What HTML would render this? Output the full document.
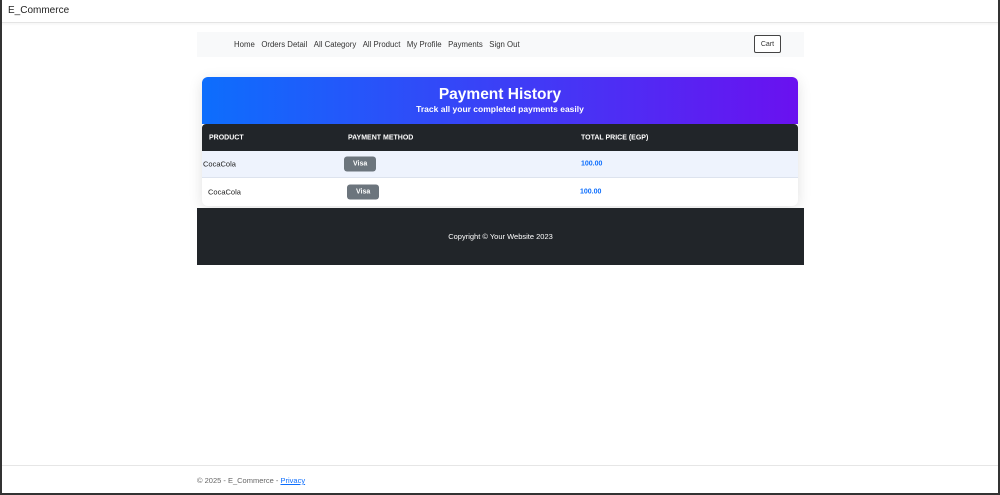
<!DOCTYPE html>
<html><head><style>
*{box-sizing:border-box;margin:0;padding:0}
body{width:1000px;height:495px;overflow:hidden;background:#fff;font-family:"Liberation Sans",sans-serif;position:relative}
.frame{position:absolute;left:0;top:0;width:1000px;height:495px;border-left:2px solid #333;border-right:2px solid #333;border-bottom:2px solid #333;pointer-events:none}
.top{position:absolute;left:0;top:0;width:1000px;height:23px;border-bottom:1px solid #e4e4e4;box-shadow:0 1px 3px rgba(0,0,0,.05)}
.top span{position:absolute;left:8px;top:5px;font-size:10px;color:#222}
.nav{position:absolute;left:197px;top:32px;width:607px;height:25px;background:#f8f9fa}
.nav .links{position:absolute;left:37px;top:8px;font-size:7.8px;color:#333}
.nav .links span{margin-right:6.5px}
.cart{position:absolute;left:754px;top:35px;width:27px;height:18px;border:1px solid #444;border-radius:2px;font-size:7px;text-align:center;line-height:18px;color:#333;background:#fff}
.card{position:absolute;left:202px;top:77px;width:596px;height:129px;border-radius:6px;overflow:hidden;box-shadow:0 3px 14px rgba(0,0,0,.12);background:#fff}
.hd{height:47px;background:linear-gradient(90deg,#0d6efd,#6a11f0);color:#fff;text-align:center}
.hd h1{font-size:15.5px;font-weight:bold;padding-top:9px;line-height:18px}
.hd p{font-size:8.5px;font-weight:bold;line-height:11px}
.th{height:27px;background:#212529;color:#fff;font-size:7px;font-weight:bold;position:relative;border-radius:4px 4px 0 0}
.th span,.r span{position:absolute;top:50%;transform:translateY(-50%)}
.r{height:27px;position:relative;font-size:7.5px;color:#222}
.r1{background:#eef3fd;border-bottom:1px solid #dde3ee}
.b{background:#6c757d;color:#fff;font-weight:bold;font-size:7px;padding:4px 9px;border-radius:3px}
.pr{color:#0d6efd;font-weight:bold;font-size:7px}
.foot{position:absolute;left:197px;top:208px;width:607px;height:57px;background:#212529;color:#fff;font-size:7.5px;text-align:center;line-height:58px}
.bot{position:absolute;left:0;top:465px;width:1000px;border-top:1px solid #e6e6e6}
.bot span{position:absolute;left:197px;top:10px;font-size:7.5px;color:#666}
.bot a{color:#0d6efd;text-decoration:underline}
</style></head><body>
<div class="top"><span>E_Commerce</span></div>
<div class="nav"><div class="links"><span>Home</span><span>Orders Detail</span><span>All Category</span><span>All Product</span><span>My Profile</span><span>Payments</span><span>Sign Out</span></div></div>
<div class="cart">Cart</div>
<div class="card">
<div class="hd"><h1>Payment History</h1><p>Track all your completed payments easily</p></div>
<div class="th"><span style="left:7px">PRODUCT</span><span style="left:146px">PAYMENT METHOD</span><span style="left:379px">TOTAL PRICE (EGP)</span></div>
<div class="r r1"><span style="left:1px">CocaCola</span><span style="left:142px" class="b">Visa</span><span style="left:379px" class="pr">100.00</span></div>
<div class="r"><span style="left:6px">CocaCola</span><span style="left:145px" class="b">Visa</span><span style="left:378px" class="pr">100.00</span></div>
</div>
<div class="foot">Copyright © Your Website 2023</div>
<div class="bot"><span>© 2025 - E_Commerce - <a>Privacy</a></span></div>
<div class="frame"></div>
</body></html>
